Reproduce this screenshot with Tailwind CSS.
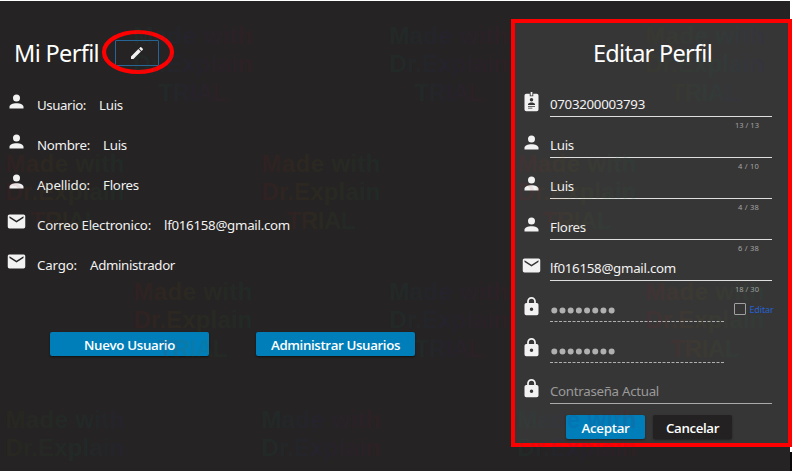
<!DOCTYPE html>
<html lang="es">
<head>
<meta charset="utf-8">
<title>Mi Perfil</title>
<script src="https://cdn.jsdelivr.net/npm/@tailwindcss/browser@4"></script>
</head>
<body class="w-[793px] h-[473px] overflow-hidden bg-white font-['Noto_Sans',sans-serif] text-[13.3px] text-[#f2f2f2]">
<svg class="hidden">
  <symbol id="user" viewBox="0 0 24 24"><path fill="currentColor" d="M12 4a4 4 0 1 1 0 8 4 4 0 0 1 0-8m0 10c4.420 0 8 1.790 8 4v2H4v-2c0-2.210 3.580-4 8-4"/></symbol>
  <symbol id="mail" viewBox="0 0 24 24"><path fill="currentColor" d="M20 8l-8 5-8-5V6l8 5 8-5m0-2H4c-1.110 0-2 .89-2 2v12a2 2 0 0 0 2 2h16a2 2 0 0 0 2-2V6c0-1.110-.9-2-2-2"/></symbol>
  <symbol id="lock" viewBox="0 0 24 24"><path fill="currentColor" d="M12 17a2 2 0 0 0 0-4 2 2 0 0 0 0 4m6-9a2 2 0 0 1 2 2v10a2 2 0 0 1-2 2H6a2 2 0 0 1-2-2V10a2 2 0 0 1 2-2h1V6a5 5 0 0 1 10 0v2h1m-6-5a3 3 0 0 0-3 3v2h6V6a3 3 0 0 0-3-3"/></symbol>
  <symbol id="badge" viewBox="0 0 24 24"><path fill="currentColor" fill-rule="evenodd" d="M18 3h-4v3h-4V3H6a2 2 0 0 0-2 2v16a2 2 0 0 0 2 2h12a2 2 0 0 0 2-2V5a2 2 0 0 0-2-2m-6 5a2 2 0 1 1 0 4 2 2 0 0 1 0-4m-4 8v-1c0-1.330 2.670-2 4-2s4 .67 4 2v1H8m5 4H8v-1h5v1m3-2H8v-1h8v1M13 5h-2V1h2v4"/></symbol>
  <symbol id="pencil" viewBox="0 0 24 24"><path fill="currentColor" d="M20.710 7.040c.39-.39.39-1.040 0-1.410l-2.340-2.340c-.37-.39-1.020-.39-1.410 0l-1.840 1.830 3.750 3.750M3 17.250V21h3.750L17.810 9.930l-3.750-3.750L3 17.250z"/></symbol>
</svg>
<div class="relative pt-px w-[793px] h-[471px]">
  <main class="flex w-[790px] h-[470px] bg-[#252323]">
    <section class="shrink-0 w-[511px] h-[470px] flex flex-col">
      <header class="flex items-center h-[34px] mt-[35px] pl-[14px]">
        <h1 class="w-[101px] text-[23.5px] leading-[34px] whitespace-nowrap text-white"><span data-w="85">Mi Perfil</span></h1>
        <button class="w-[44px] h-[26px] border border-[#286597] rounded-[1px] flex items-center justify-center"><svg class="size-4"><use href="#pencil"/></svg></button>
      </header>
      <div class="mt-[14px] pl-[6px] flex flex-col">
        <div class="flex h-[40px]"><svg class="size-[21px] mt-[7px] mr-[10px]"><use href="#user"/></svg><p class="leading-[42px] whitespace-nowrap"><span data-w="49">Usuario:</span><span class="ml-[13px]" data-w="24">Luis</span></p></div>
        <div class="flex h-[40px]"><svg class="size-[21px] mt-[7px] mr-[10px]"><use href="#user"/></svg><p class="leading-[42px] whitespace-nowrap"><span data-w="53">Nombre:</span><span class="ml-[13px]" data-w="24">Luis</span></p></div>
        <div class="flex h-[40px]"><svg class="size-[21px] mt-[7px] mr-[10px]"><use href="#user"/></svg><p class="leading-[42px] whitespace-nowrap"><span data-w="53">Apellido:</span><span class="ml-[13px]" data-w="36">Flores</span></p></div>
        <div class="flex h-[40px]"><svg class="size-[21px] mt-[7px] mr-[10px]"><use href="#mail"/></svg><p class="leading-[42px] whitespace-nowrap"><span data-w="114">Correo Electronico:</span><span class="ml-[13px]" data-w="126">lf016158@gmail.com</span></p></div>
        <div class="flex h-[40px]"><svg class="size-[21px] mt-[7px] mr-[10px]"><use href="#mail"/></svg><p class="leading-[42px] whitespace-nowrap"><span data-w="40">Cargo:</span><span class="ml-[13px]" data-w="85">Administrador</span></p></div>
      </div>
      <div class="flex gap-[47px] pl-[50px] mt-[48px] font-['Open_Sans',sans-serif] font-semibold text-white">
        <button class="w-[159px] h-[24px] rounded-[2px] bg-[#007eb9] shadow-[0_1px_2px_#111] leading-[26px]"><span data-w="91">Nuevo Usuario</span></button>
        <button class="w-[159px] h-[24px] rounded-[2px] bg-[#007eb9] shadow-[0_1px_2px_#111] leading-[26px]"><span data-w="129">Administrar Usuarios</span></button>
      </div>
    </section>
    <section class="relative shrink-0 w-[281px] h-[428px] mt-[18px] border-4 border-[#ff0000] bg-[#373636] flex flex-col">
      <h2 class="text-[23.5px] leading-[34px] mt-[13px] h-[34px] pl-[78px] whitespace-nowrap text-white"><span data-w="119">Editar Perfil</span></h2>
      <form class="mt-[20px] pl-[6px] flex flex-col">
        <div class="flex h-[41px]"><svg class="size-[21px] mt-px mr-[8px]"><use href="#badge"/></svg><div class="w-[222px]"><p class="h-[27px] border-b border-[#dedede] leading-[29px] whitespace-nowrap"><span data-w="95">0703200003793</span></p><p class="text-[7.5px] leading-[16px] text-right pr-[13px] text-[#a4a4a4]"><span data-w="24">13 / 13</span></p></div></div>
        <div class="flex h-[41px]"><svg class="size-[21px] mt-px mr-[8px]"><use href="#user"/></svg><div class="w-[222px]"><p class="h-[27px] border-b border-[#dedede] leading-[29px] whitespace-nowrap"><span data-w="24">Luis</span></p><p class="text-[7.5px] leading-[16px] text-right pr-[13px] text-[#a4a4a4]"><span data-w="21">4 / 10</span></p></div></div>
        <div class="flex h-[41px]"><svg class="size-[21px] mt-px mr-[8px]"><use href="#user"/></svg><div class="w-[222px]"><p class="h-[27px] border-b border-[#dedede] leading-[29px] whitespace-nowrap"><span data-w="24">Luis</span></p><p class="text-[7.5px] leading-[16px] text-right pr-[13px] text-[#a4a4a4]"><span data-w="21">4 / 38</span></p></div></div>
        <div class="flex h-[41px]"><svg class="size-[21px] mt-px mr-[8px]"><use href="#user"/></svg><div class="w-[222px]"><p class="h-[27px] border-b border-[#dedede] leading-[29px] whitespace-nowrap"><span data-w="36">Flores</span></p><p class="text-[7.5px] leading-[16px] text-right pr-[13px] text-[#a4a4a4]"><span data-w="21">6 / 38</span></p></div></div>
        <div class="flex h-[41px]"><svg class="size-[21px] mt-px mr-[8px]"><use href="#mail"/></svg><div class="w-[222px]"><p class="h-[27px] border-b border-[#dedede] leading-[29px] whitespace-nowrap"><span data-w="126">lf016158@gmail.com</span></p><p class="text-[7.5px] leading-[16px] text-right pr-[13px] text-[#a4a4a4]"><span data-w="24">18 / 30</span></p></div></div>
        <div class="flex h-[41px]"><svg class="size-[21px] mt-px mr-[8px]"><use href="#lock"/></svg>
          <svg class="w-[175px] h-[27px] text-[#b0b0b0]"><path d="M4.300 15.500h59" fill="none" stroke="currentColor" stroke-width="6" stroke-linecap="round" stroke-dasharray="0 8.190"/><path d="M0 26.500h175" stroke="currentColor" stroke-dasharray="3 1.500"/></svg>
          <label class="flex ml-[9px] mt-[8px] gap-[4px] text-[9px] leading-[14px] text-[#2462d0]"><span class="size-[11.5px] border-[1.5px] border-[#a0a0a0] rounded-[1px]"></span><span data-w="24">Editar</span></label></div>
        <div class="flex h-[41px]"><svg class="size-[21px] mt-px mr-[8px]"><use href="#lock"/></svg>
          <svg class="w-[175px] h-[27px] text-[#b0b0b0]"><path d="M4.300 15.500h59" fill="none" stroke="currentColor" stroke-width="6" stroke-linecap="round" stroke-dasharray="0 8.190"/><path d="M0 26.500h175" stroke="currentColor" stroke-dasharray="3 1.500"/></svg></div>
        <div class="flex h-[38px]"><svg class="size-[21px] mt-px mr-[8px]"><use href="#lock"/></svg><p class="w-[222px] h-[27px] border-b border-[#aaa] leading-[29px] whitespace-nowrap text-[#9a9a9a]"><span data-w="109">Contraseña Actual</span></p></div>
      </form>
      <div class="flex gap-[8px] pl-[51px] font-['Open_Sans',sans-serif] font-semibold text-white">
        <button class="w-[79px] h-[24px] rounded-[2px] bg-[#007eb9] shadow-[0_1px_2px_#222] leading-[26px]"><span data-w="48">Aceptar</span></button>
        <button class="w-[79px] h-[24px] rounded-[2px] bg-[#232121] shadow-[0_1px_2px_#222] leading-[26px]"><span data-w="53">Cancelar</span></button>
      </div>
    </section>
  </main>
  <svg class="absolute left-0 top-0 pointer-events-none" width="793" height="471" viewBox="0 0 793 471">
    <path d="M790 452h2v19h-2z" fill="#0a0808"/>
    <ellipse cx="138" cy="52" rx="34" ry="20" fill="none" stroke="#ff0000" stroke-width="4.200"/>
    <defs>
      <linearGradient id="warm"><stop offset="0" stop-color="#a01030"/><stop offset=".4" stop-color="#706010"/><stop offset="1" stop-color="#087050"/></linearGradient>
      <linearGradient id="cool"><stop offset="0" stop-color="#087050"/><stop offset=".5" stop-color="#302080"/><stop offset="1" stop-color="#801030"/></linearGradient>
      <linearGradient id="green"><stop offset="0" stop-color="#505010"/><stop offset=".6" stop-color="#087050"/><stop offset="1" stop-color="#302080"/></linearGradient>
    </defs>
    <g opacity=".09" font-family="Liberation Sans" font-weight="700" font-size="24" text-anchor="middle">
      <g fill="url(#cool)"><text x="193" y="44" textLength="119">Made with</text><text x="193" y="72" textLength="119">Dr.Explain</text><text x="193" y="101" textLength="69">TRIAL</text></g>
      <g fill="url(#cool)"><text x="449" y="44" textLength="119">Made with</text><text x="449" y="72" textLength="119">Dr.Explain</text><text x="449" y="101" textLength="69">TRIAL</text></g>
      <g fill="url(#green)"><text x="705" y="44" textLength="119">Made with</text><text x="705" y="72" textLength="119">Dr.Explain</text><text x="705" y="101" textLength="69">TRIAL</text></g>
      <g fill="url(#warm)"><text x="65" y="172" textLength="119">Made with</text><text x="65" y="200" textLength="119">Dr.Explain</text><text x="65" y="229" textLength="69">TRIAL</text></g>
      <g fill="url(#warm)"><text x="321" y="172" textLength="119">Made with</text><text x="321" y="200" textLength="119">Dr.Explain</text><text x="321" y="229" textLength="69">TRIAL</text></g>
      <g fill="url(#warm)"><text x="577" y="172" textLength="119">Made with</text><text x="577" y="200" textLength="119">Dr.Explain</text><text x="577" y="229" textLength="69">TRIAL</text></g>
      <g fill="url(#warm)"><text x="193" y="300" textLength="119">Made with</text><text x="193" y="328" textLength="119">Dr.Explain</text><text x="193" y="357" textLength="69">TRIAL</text></g>
      <g fill="url(#cool)"><text x="449" y="300" textLength="119">Made with</text><text x="449" y="328" textLength="119">Dr.Explain</text><text x="449" y="357" textLength="69">TRIAL</text></g>
      <g fill="url(#warm)"><text x="705" y="300" textLength="119">Made with</text><text x="705" y="328" textLength="119">Dr.Explain</text><text x="705" y="357" textLength="69">TRIAL</text></g>
      <g fill="url(#green)"><text x="65" y="428" textLength="119">Made with</text><text x="65" y="456" textLength="119">Dr.Explain</text></g>
      <g fill="url(#cool)"><text x="321" y="428" textLength="119">Made with</text><text x="321" y="456" textLength="119">Dr.Explain</text></g>
      <g fill="url(#cool)"><text x="577" y="428" textLength="119">Made with</text><text x="577" y="456" textLength="119">Dr.Explain</text></g>
    </g>
  </svg>
</div>
<script>
function fit() {
  document.querySelectorAll('[data-w]').forEach(function (el) {
    el.style.display = 'inline-block';
    el.style.whiteSpace = 'nowrap';
    el.style.letterSpacing = '0px';
    el.style.width = 'max-content';
    var natural = el.getBoundingClientRect().width;
    el.style.letterSpacing = (el.dataset.w - natural) / el.textContent.length + 'px';
  });
}
fit();
window.addEventListener('load', fit);
document.fonts.ready.then(fit);
</script>
</body>
</html>
